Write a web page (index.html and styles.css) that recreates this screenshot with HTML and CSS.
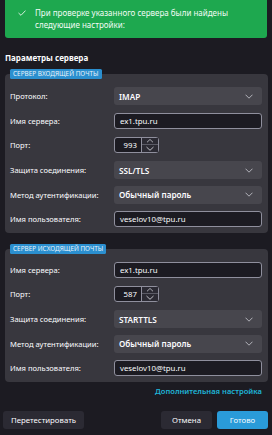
FILE: index.html
```html
<!DOCTYPE html>
<html lang="ru">
<head>
<meta charset="utf-8">
<link rel="stylesheet" href="styles.css">
</head>
<body>
<div class="banner">
  <svg class="check" viewBox="0 0 8 6" width="8" height="6"><path d="M0.5 3 L3 5.3 L7.5 0.6" fill="none" stroke="#e8f6ec" stroke-width="0.9"/></svg>
  <div class="banner-text">При проверке указанного сервера были найдены следующие настройки:</div>
</div>
<div class="title">Параметры сервера</div>

<div class="panel p1">
  <div class="badge">СЕРВЕР ВХОДЯЩЕЙ ПОЧТЫ</div>
  <div class="rows">
    <div class="row"><span class="lbl">Протокол:</span><div class="select">IMAP<svg class="chev" viewBox="0 0 8 5" width="8" height="5"><path d="M0.5 0.7 L4 4.2 L7.5 0.7" fill="none" stroke="#bdbdc4" stroke-width="0.9"/></svg></div></div>
    <div class="row"><span class="lbl">Имя сервера:</span><div class="input">ex1.tpu.ru</div></div>
    <div class="row"><span class="lbl">Порт:</span><div class="spin"><div class="num">993</div><div class="arrows"><svg viewBox="0 0 16 7" width="16" height="7"><path d="M4.5 5 L8 1.7 L11.5 5" fill="none" stroke="#cfcfd6" stroke-width="0.9"/></svg><svg viewBox="0 0 16 7" width="16" height="7"><path d="M4.5 2 L8 5.3 L11.5 2" fill="none" stroke="#cfcfd6" stroke-width="0.9"/></svg></div></div></div>
    <div class="row"><span class="lbl">Защита соединения:</span><div class="select">SSL/TLS<svg class="chev" viewBox="0 0 8 5" width="8" height="5"><path d="M0.5 0.7 L4 4.2 L7.5 0.7" fill="none" stroke="#bdbdc4" stroke-width="0.9"/></svg></div></div>
    <div class="row"><span class="lbl">Метод аутентификации:</span><div class="select">Обычный пароль<svg class="chev" viewBox="0 0 8 5" width="8" height="5"><path d="M0.5 0.7 L4 4.2 L7.5 0.7" fill="none" stroke="#bdbdc4" stroke-width="0.9"/></svg></div></div>
    <div class="row"><span class="lbl">Имя пользователя:</span><div class="input">veselov10@tpu.ru</div></div>
  </div>
</div>

<div class="panel p2">
  <div class="badge">СЕРВЕР ИСХОДЯЩЕЙ ПОЧТЫ</div>
  <div class="rows">
    <div class="row"><span class="lbl">Имя сервера:</span><div class="input">ex1.tpu.ru</div></div>
    <div class="row"><span class="lbl">Порт:</span><div class="spin"><div class="num">587</div><div class="arrows"><svg viewBox="0 0 16 7" width="16" height="7"><path d="M4.5 5 L8 1.7 L11.5 5" fill="none" stroke="#cfcfd6" stroke-width="0.9"/></svg><svg viewBox="0 0 16 7" width="16" height="7"><path d="M4.5 2 L8 5.3 L11.5 2" fill="none" stroke="#cfcfd6" stroke-width="0.9"/></svg></div></div></div>
    <div class="row"><span class="lbl">Защита соединения:</span><div class="select">STARTTLS<svg class="chev" viewBox="0 0 8 5" width="8" height="5"><path d="M0.5 0.7 L4 4.2 L7.5 0.7" fill="none" stroke="#bdbdc4" stroke-width="0.9"/></svg></div></div>
    <div class="row"><span class="lbl">Метод аутентификации:</span><div class="select">Обычный пароль<svg class="chev" viewBox="0 0 8 5" width="8" height="5"><path d="M0.5 0.7 L4 4.2 L7.5 0.7" fill="none" stroke="#bdbdc4" stroke-width="0.9"/></svg></div></div>
    <div class="row"><span class="lbl">Имя пользователя:</span><div class="input">veselov10@tpu.ru</div></div>
  </div>
</div>

<div class="linkrow"><span class="link">Дополнительная настройка</span></div>

<div class="buttons">
  <div class="btn">Перетестировать</div>
  <div class="spacer"></div>
  <div class="btn cancel">Отмена</div>
  <div class="btn primary">Готово</div>
</div>
</body>
</html>
```
FILE: styles.css
```css
* { box-sizing: border-box; }
html, body { margin: 0; padding: 0; }
body {
  width: 272px;
  height: 435px;
  background: #1c1b22;
  color: #fbfbfe;
  font-family: "Noto Sans", "Open Sans", sans-serif;
  font-size: 8px;
  overflow: hidden;
}
.banner {
  margin: 0 5px;
  height: 38px;
  background: #1ea84f;
  border-radius: 0 0 3px 3px;
  display: flex;
  align-items: flex-start;
  padding: 7px 8px 0 13px;
  color: #f2fbf5;
  font-size: 8px;
  line-height: 12px;
}
.check { margin-top: 3px; flex: none; }
.banner-text { margin-left: 9px; width: 200px; }
.title {
  margin: 14px 0 0 5px;
  font-weight: 700;
  font-size: 8px;
  line-height: 12px;
  height: 12px;
}
.panel {
  position: relative;
  margin: 0 4px 0 5px;
  background: #38373e;
  border-radius: 4px;
  padding: 13px 6px 4px 5px;
}
.p1 { margin-top: 10px; }
.p2 { margin-top: 16px; padding-top: 12px; }
.badge {
  position: absolute;
  left: 5px;
  top: -5px;
  height: 10px;
  padding: 0 3px;
  background: #2b8fcf;
  border-radius: 1.5px;
  color: #eaf4fb;
  font-size: 6.4px;
  line-height: 10px;
  white-space: nowrap;
}
.rows { display: flex; flex-direction: column; gap: 6px; }
.row {
  display: flex;
  align-items: center;
  height: 18.6px;
}
.lbl { width: 104px; flex: none; font-size: 7.6px; }
.select {
  flex: 1;
  height: 18px;
  background: #47464d;
  border-radius: 3px;
  display: flex;
  align-items: center;
  justify-content: space-between;
  padding: 0 9px 0 5px;
  font-weight: 600;
  font-size: 8.2px;
}
.input {
  flex: 1;
  height: 16px;
  background: #1c1b22;
  border: 1px solid #8f8f9d;
  border-radius: 3px;
  display: flex;
  align-items: center;
  padding: 0 5px;
  font-size: 7.8px;
}
.spin {
  display: flex;
  height: 16px;
  border: 1px solid #8f8f9d;
  border-radius: 3px;
  background: #1c1b22;
  width: 45px;
}
.num {
  width: 28px;
  text-align: right;
  padding-right: 4px;
  line-height: 14px;
  font-size: 7.8px;
}
.arrows {
  flex: 1;
  display: flex;
  flex-direction: column;
  border-left: 1px solid #8f8f9d;
  background: #2b2a33;
}
.arrows svg { display: block; width: 16px; height: 7px; }
.arrows svg:first-child { border-bottom: 1px solid #5b5b66; }
.linkrow {
  display: flex;
  justify-content: flex-end;
  padding-right: 10px;
  margin-top: 3px;
  line-height: 12px;
}
.link { color: #1fb5d8; font-weight: 600; font-size: 7.6px; }
.buttons {
  display: flex;
  margin: 14px 4px 0 3px;
  gap: 5px;
}
.spacer { flex: 1; }
.btn {
  height: 18px;
  background: #2b2a33;
  border-radius: 3px;
  display: flex;
  align-items: center;
  justify-content: center;
  font-size: 7.8px;
  width: 81px;
}
.cancel { width: 51px; }
.primary { width: 51px; background: #2a9bd9; color: #f4faff; }
```
